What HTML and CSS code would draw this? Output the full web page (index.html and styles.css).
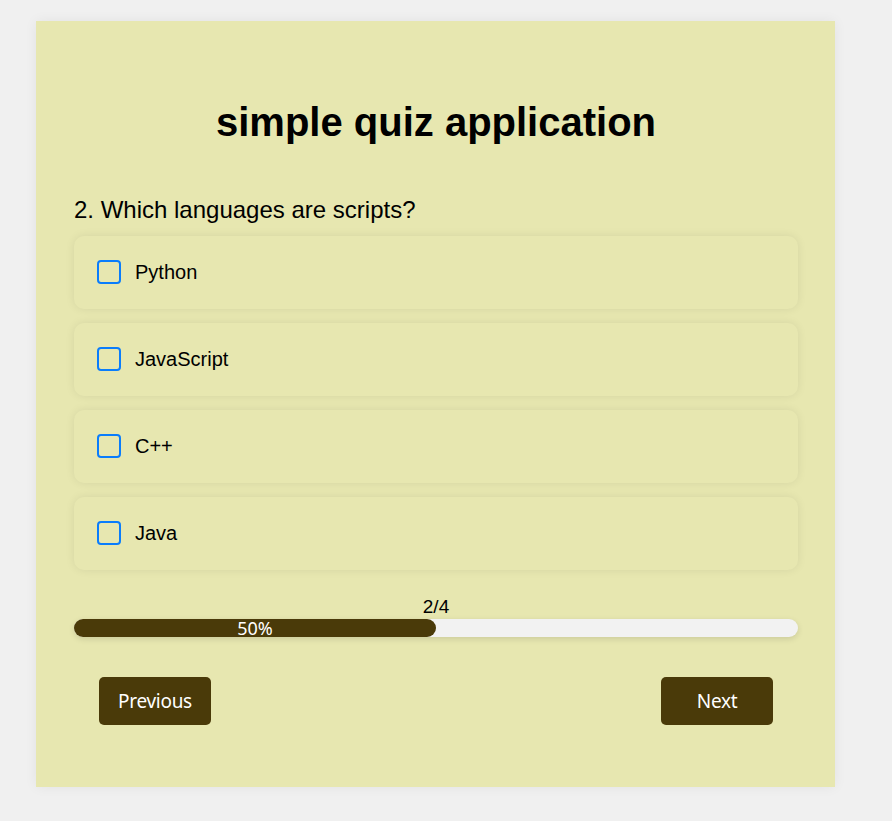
FILE: index.html
```html
<!DOCTYPE html>
<html lang="en">
<head>
<meta charset="utf-8">
<title>simple quiz application</title>
<link rel="stylesheet" href="styles.css">
</head>
<body>
<div class="quiz">
  <h1 class="title">simple quiz application</h1>
  <p class="question">2. Which languages are scripts?</p>
  <div class="options">
    <label class="option"><span class="box"></span><span class="opt-text">Python</span></label>
    <label class="option"><span class="box"></span><span class="opt-text">JavaScript</span></label>
    <label class="option"><span class="box"></span><span class="opt-text">C++</span></label>
    <label class="option"><span class="box"></span><span class="opt-text">Java</span></label>
  </div>
  <div class="progress">
    <div class="count">2/4</div>
    <div class="track"><div class="fill" style="width:50%">50%</div></div>
  </div>
  <div class="nav">
    <button class="btn">Previous</button>
    <button class="btn">Next</button>
  </div>
</div>
</body>
</html>
```
FILE: styles.css
```css
html, body {
  margin: 0;
  padding: 0;
}
body {
  background: #f0f0f0;
  font-family: "Liberation Sans", Arial, sans-serif;
  color: #000;
  padding: 21px 0 0 36px;
  height: 821px;
  box-sizing: border-box;
}
.quiz {
  display: flow-root;
  width: 799px;
  box-sizing: border-box;
  background: #e7e7b0;
  padding: 78px 37px 62px 38px;
  box-shadow: 0 0 12px rgba(0, 0, 0, 0.06);
}
.title {
  margin: 0;
  font-size: 40px;
  line-height: 46px;
  font-weight: bold;
  text-align: center;
}
.question {
  margin: 51px 0 12px;
  font-size: 24px;
  line-height: 28px;
}
.options {
  display: flex;
  flex-direction: column;
  gap: 14px;
}
.option {
  display: flex;
  align-items: center;
  gap: 14px;
  padding: 24px 23px;
  border-radius: 10px;
  background: #e7e7b0;
  box-shadow: 0 0 10px rgba(0, 0, 0, 0.08);
  font-size: 20px;
  line-height: 25px;
}
.box {
  width: 24px;
  height: 24px;
  box-sizing: border-box;
  border: 2px solid #0a7dfc;
  border-radius: 4px;
  margin-top: -2px;
  flex: none;
}
.progress {
  margin-top: 26px;
}
.count {
  text-align: center;
  font-size: 19px;
  line-height: 22px;
  margin-bottom: 1px;
}
.track {
  height: 18px;
  border-radius: 9px;
  background: #f2f2f2;
  box-shadow: 0 2px 6px rgba(0, 0, 0, 0.12);
}
.fill {
  height: 18px;
  background: #4a3a09;
  border-radius: 9px;
  color: #fff;
  text-align: center;
  font-family: "Noto Sans", sans-serif;
  font-size: 18px;
  line-height: 18px;
}
.nav {
  display: flex;
  justify-content: space-between;
  padding: 0 25px;
  margin-top: 40px;
}
.btn {
  width: 112px;
  height: 48px;
  border: none;
  border-radius: 5px;
  background: #4a3a09;
  color: #fff;
  font-family: "Noto Sans", sans-serif;
  font-size: 19px;
  letter-spacing: -0.3px;
  padding: 0;
}
```
